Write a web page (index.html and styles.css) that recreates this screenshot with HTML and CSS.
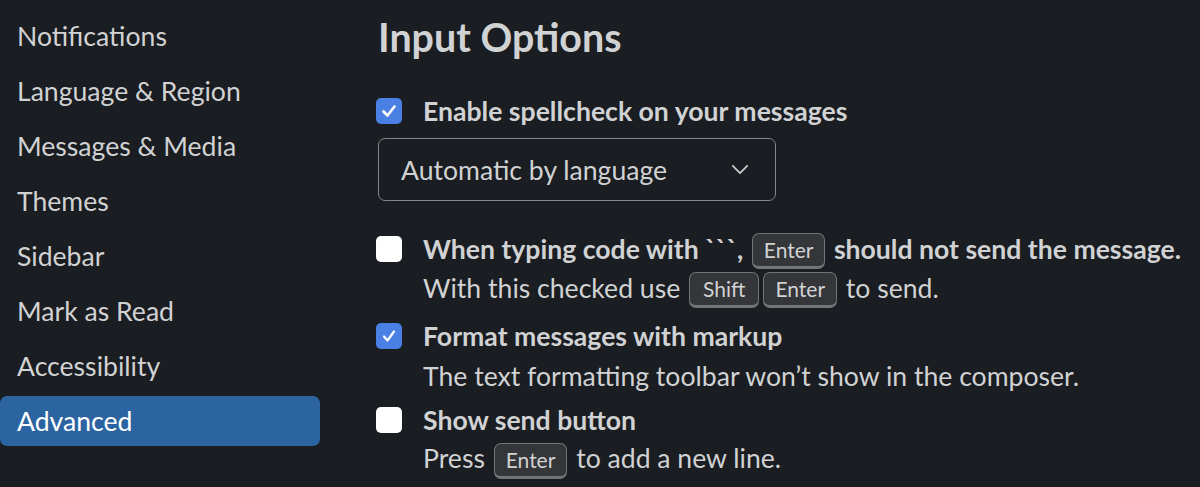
FILE: index.html
```html
<!DOCTYPE html>
<html lang="en">
<head>
<meta charset="utf-8">
<link rel="stylesheet" href="styles.css">
</head>
<body>
<div class="page">
  <nav class="sidebar">
    <div class="nav-item">Notifications</div>
    <div class="nav-item">Language &amp; Region</div>
    <div class="nav-item">Messages &amp; Media</div>
    <div class="nav-item">Themes</div>
    <div class="nav-item">Sidebar</div>
    <div class="nav-item">Mark as Read</div>
    <div class="nav-item">Accessibility</div>
    <div class="nav-item active">Advanced</div>
  </nav>
  <main class="content">
    <h1 class="title">Input Options</h1>

    <div class="option first">
      <span class="check checked"><svg viewBox="0 0 26 26" width="26" height="26"><path d="M7.5 13.5 L11.5 17.5 L18.5 8.5" fill="none" stroke="#fff" stroke-width="2.6" stroke-linecap="round" stroke-linejoin="round"/></svg></span>
      <div class="option-text">
        <div class="label">Enable spellcheck on your messages</div>
      </div>
    </div>
    <div class="select">
      <span>Automatic by language</span>
      <svg class="chev" viewBox="0 0 20 12" width="18" height="11"><path d="M2 2 L10 10 L18 2" fill="none" stroke="#c7c8c9" stroke-width="2" stroke-linecap="round" stroke-linejoin="round"/></svg>
    </div>

    <div class="option code">
      <span class="check"></span>
      <div class="option-text">
        <div class="label">When typing code with ```, <kbd class="key">Enter</kbd> should not send the message.</div>
        <div class="desc">With this checked use <kbd class="key wide">Shift</kbd><kbd class="key">Enter</kbd> to send.</div>
      </div>
    </div>

    <div class="option markup">
      <span class="check checked"><svg viewBox="0 0 26 26" width="26" height="26"><path d="M8 13.5 L11.5 17.5 L18 8.5" fill="none" stroke="#fff" stroke-width="2.2" stroke-linecap="round" stroke-linejoin="round"/></svg></span>
      <div class="option-text">
        <div class="label">Format messages with markup</div>
        <div class="desc">The text formatting toolbar won’t show in the composer.</div>
      </div>
    </div>

    <div class="option send">
      <span class="check"></span>
      <div class="option-text">
        <div class="label">Show send button</div>
        <div class="desc">Press <kbd class="key">Enter</kbd> to add a new line.</div>
      </div>
    </div>
  </main>
</div>
</body>
</html>
```

FILE: styles.css
```css
html, body {
  margin: 0;
  padding: 0;
  background: #1a1d21;
}
body {
  font-family: Lato, "Noto Sans", sans-serif;
  color: #d1d2d3;
  width: 1200px;
  height: 487px;
  overflow: hidden;
}
.page {
  display: flex;
  gap: 58px;
}
.sidebar {
  width: 320px;
  flex: none;
  display: flex;
  flex-direction: column;
  gap: 5px;
  padding-top: 11px;
}
.nav-item {
  height: 50px;
  line-height: 50px;
  padding-left: 17px;
  font-size: 26.6px;
  color: #d1d2d3;
  border-radius: 7px;
}
.nav-item.active {
  background: #2b64a0;
  color: #ffffff;
}
.content {
  flex: 1;
  display: flex;
  flex-direction: column;
  white-space: nowrap;
}
.title {
  margin: 0;
  font-size: 39.4px;
  font-weight: 700;
  line-height: 44px;
  padding-top: 15px;
  color: #d1d2d3;
}
.option {
  display: flex;
  align-items: flex-start;
  gap: 21px;
  margin-left: -2px;
}
.check {
  width: 26px;
  height: 26px;
  flex: none;
  border-radius: 5px;
  background: #ffffff;
  margin-top: 6px;
  display: block;
}
.check svg { display: block; }
.check.checked {
  background: #4a7fe3;
}
.label {
  font-weight: 700;
  font-size: 26.6px;
  line-height: 39px;
  color: #d1d2d3;
}
.desc {
  font-size: 26.6px;
  line-height: 40px;
  color: #d1d2d3;
}
.option.first { margin-top: 33px; }
.select {
  margin-top: 7px;
  width: 398px;
  height: 63px;
  border: 1.5px solid #85868a;
  border-radius: 7px;
  box-sizing: border-box;
  display: flex;
  align-items: center;
  justify-content: space-between;
  padding: 0 26px 0 22px;
  font-size: 26.6px;
}
.option.code { margin-top: 29px; }
.option.code .desc { margin-top: -2px; }
.option.markup { margin-top: 8px; }
.option.send { margin-top: 5px; }
.option.send .desc { margin-top: -2px; }
.key {
  display: inline-block;
  font-family: Lato, "Noto Sans", sans-serif;
  font-size: 21px;
  line-height: 32px;
  padding: 0 11px;
  background: #34363a;
  border: 1.5px solid #737478;
  border-bottom-width: 3px;
  border-radius: 7px;
  color: #d1d2d3;
  font-weight: 400;
  vertical-align: middle;
  margin: 0 2px;
  position: relative;
  top: -1px;
}
.key.wide {
  padding: 0 13px;
}
```
